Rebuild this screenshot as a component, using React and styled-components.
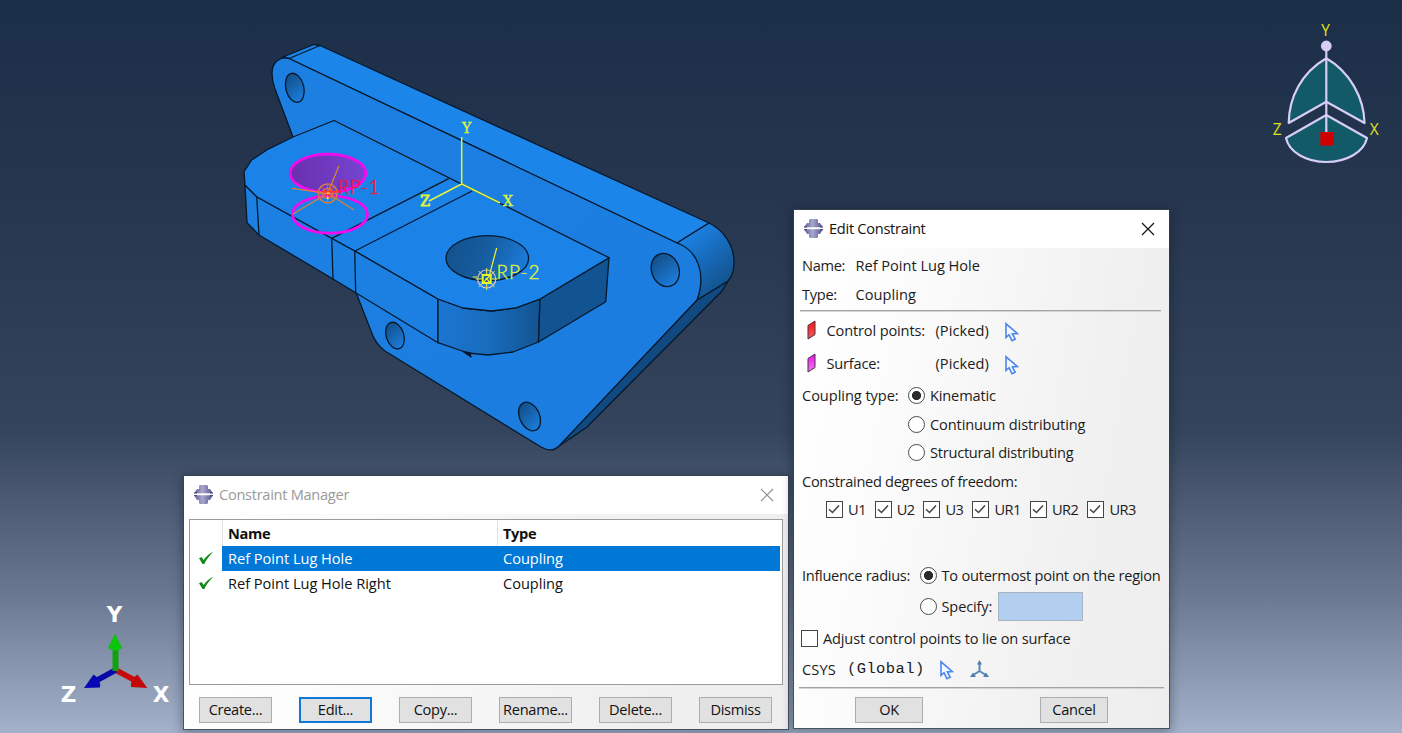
import React from "react";
import styled, { createGlobalStyle } from "styled-components";

const Global = createGlobalStyle`
  body { margin: 0; overflow: hidden; }
  * { box-sizing: border-box; }
`;

const Viewport = styled.main`
  position: relative;
  width: 1402px;
  height: 733px;
  overflow: hidden;
  font-family: "Open Sans", "Noto Sans", sans-serif;
  font-size: 14.6px;
  letter-spacing: -0.3px;
  color: #1c1c1c;
  background: linear-gradient(#1b2e48 0, #27364f 200px, #34445c 430px, #68778f 590px, #a3b2ca 733px);
`;

const Scene = styled.svg`
  display: block;
`;

const Window = styled.section`
  position: absolute;
  left: ${(p) => p.$x}px;
  top: ${(p) => p.$y}px;
  width: ${(p) => p.$w}px;
  height: ${(p) => p.$h}px;
  display: flex;
  flex-direction: column;
  background: linear-gradient(100deg, #fff 0%, #fcfcfc 25%, #f0f0f0 75%, #eeeeee 100%);
  box-shadow: 0 0 0 1px rgba(55, 64, 78, 0.75), 0 2px 10px 2px rgba(10, 18, 32, 0.35);
  svg { display: block; }
`;

const TitleBar = styled.header`
  flex: none;
  height: 38px;
  padding: 0 14px 1px 10px;
  display: flex;
  align-items: center;
  gap: 6px;
  background: #fff;
  color: ${(p) => (p.$inactive ? "#9a9a9a" : "#111")};
  svg:last-child { margin-left: auto; }
`;

const Title = styled.span`
  padding-bottom: 2px;
  letter-spacing: -0.28px;
`;

const Row = styled.div`
  flex: none;
  display: flex;
  align-items: center;
  height: ${(p) => p.$h}px;
  padding-left: ${(p) => p.$pl ?? 8}px;
  white-space: nowrap;
`;

const Cell = styled.span`
  flex: none;
  width: ${(p) => (p.$w ? `${p.$w}px` : "auto")};
  padding-bottom: 1px;
  letter-spacing: ${(p) => p.$ls ?? -0.3}px;
`;

const IconCell = styled.span`
  flex: none;
  width: ${(p) => p.$w}px;
  padding-top: ${(p) => p.$pt || 0}px;
`;

const Mono = styled.span`
  width: 93px;
  font-family: "Liberation Mono", monospace;
  font-size: 15.5px;
  letter-spacing: 0.4px;
`;

const Divider = styled.hr`
  flex: none;
  width: ${(p) => p.$w}px;
  height: 2px;
  margin: ${(p) => p.$m};
  border: 0;
  border-top: 1px solid #a4a4a4;
  background: #d4d4d4;
`;

const Radio = styled.span`
  flex: none;
  width: 17px;
  height: 17px;
  margin: 0 5px 0 -0.5px;
  border: 1.3px solid #4a4a4a;
  border-radius: 50%;
  background: ${(p) => (p.$on ? "radial-gradient(circle, #2b2b2b 0 4.2px, #fff 5px)" : "#fff")};
`;

const Box = styled.span`
  flex: none;
  width: 17px;
  height: 17px;
  margin: 0 5px 0 0;
  border: 1.5px solid #444;
  background: #fff;
  display: flex;
`;

const Field = styled.span`
  width: 85px;
  height: 29px;
  border: 1px solid #a8b4c2;
  background: #b2cff0;
`;

const Button = styled.button`
  width: ${(p) => p.$w}px;
  height: 26px;
  padding: 0 0 2px;
  border: ${(p) => (p.$focus ? "2px solid #0f78d4" : "1px solid #adadad")};
  background: #e1e1e1;
  font: inherit;
  line-height: 20px;
  letter-spacing: -0.3px;
  color: #111;
`;

const ButtonBar = styled.footer`
  display: flex;
  gap: ${(p) => p.$gap}px;
  padding: ${(p) => p.$p};
`;

const List = styled.div`
  width: 594px;
  height: 166px;
  margin: 5px 0 0 5px;
  border: 1px solid #9c9c9c;
  background: #fff;
`;

const ListRow = styled.div`
  display: grid;
  grid-template-columns: 32px 275px 283px;
  height: ${(p) => p.$h || 25}px;
  font-weight: ${(p) => (p.$head ? 700 : 400)};
  letter-spacing: ${(p) => (p.$head ? -0.35 : -0.02)}px;
  > * { display: flex; align-items: center; padding-bottom: ${(p) => (p.$head ? 0 : 1)}px; }
  > :first-child { padding-left: 9px; }
  > :not(:first-child) {
    padding-left: ${(p) => (p.$head ? 5 : 6)}px;
    border-left: ${(p) => (p.$head ? "1px solid #e2e2e2" : "0")};
    background: ${(p) => (p.$selected ? "#0078d7" : "transparent")};
    color: ${(p) => (p.$selected ? "#fff" : "#111")};
  }
`;

const AppIcon = () => (
  <svg width="19" height="19" viewBox="0 0 19 19">
    <defs>
      <linearGradient id="metal" x1="0" x2="1">
        <stop offset="0" stopColor="#5c5c92" />
        <stop offset=".45" stopColor="#a7a7cf" />
        <stop offset="1" stopColor="#50508a" />
      </linearGradient>
    </defs>
    <path d="M6 0h7l1 1v3h2l3 4.300H0L3 4h2V1zM0 10.300h19L16 15h-2v3l-1 1H6l-1-1v-3H3z" fill="url(#metal)" />
    <path d="M0 8h3M16 8h3M0 10.600h3M16 10.600h3" stroke="#44447a" />
  </svg>
);

const Close = ({ color }) => (
  <svg width="14" height="14" viewBox="0 0 14 14">
    <path d="M1 1 13 13M13 1 1 13" stroke={color} strokeWidth="1.15" />
  </svg>
);

const Tick = () => (
  <svg width="15" height="14" viewBox="0 0 15 14">
    <path d="M0 7.2 2.6 6l2 3.1C7 5.700 10.200 2.200 14.300.8 10.700 4.600 7.500 8.300 5.300 13H3.500Z" fill="#128a1c" />
  </svg>
);

const Check = () => (
  <svg width="14" height="14" viewBox="0 0 14 14">
    <path d="M2 7.200 5.500 10.500 12 3.500" fill="none" stroke="#444" strokeWidth="1.5" />
  </svg>
);

const Cursor = () => (
  <svg width="14" height="20" viewBox="0 0 14 20">
    <path d="M1 1.800V15.500l3-2.800 3 6 3.200-1.500L7.300 12l5-.5Z" fill="#f4f8ff" stroke="#4a86ea" strokeWidth="1.600" />
  </svg>
);

const Patch = ({ top, bottom }) => (
  <svg width="9" height="20" viewBox="0 0 9 20">
    <defs>
      <linearGradient id={`p${top.slice(1)}`} x1="0" y1="0" x2="0" y2="1">
        <stop offset="0" stopColor={top} />
        <stop offset="1" stopColor={bottom} />
      </linearGradient>
    </defs>
    <path d="M1 5.500 8 1V14.500L1 19Z" fill={`url(#p${top.slice(1)})`} stroke="#4a3040" />
  </svg>
);

const Csys = () => (
  <svg width="19" height="19" viewBox="0 0 19 19">
    <path d="M9.500 3v8L2.500 15.500M9.500 11l7 4.500" fill="none" stroke="#5588b8" strokeWidth="2" />
    <path d="M9.500 0 12 4.500H7ZM0 17 3 12.500l3 4.500ZM19 17 16 12.500l-3 4.500Z" fill="#4f7fae" />
  </svg>
);

const spokes = (r1, r2, n = 8) =>
  Array.from({ length: n }, (_, i) => {
    const a = (i * 2 * Math.PI) / n;
    return `M${(Math.cos(a) * r1).toFixed(1)} ${(Math.sin(a) * r1).toFixed(1)}L${(Math.cos(a) * r2).toFixed(1)} ${(Math.sin(a) * r2).toFixed(1)}`;
  }).join("");

function Model() {
  return (
    <Scene width="1402" height="733" viewBox="0 0 1402 733">
      <defs>
        <linearGradient id="plate" x1="0" y1="0" x2="1" y2="1">
          <stop offset="0" stopColor="#1c80e2" />
          <stop offset="1" stopColor="#1c7cdf" />
        </linearGradient>
        <linearGradient id="end" gradientUnits="userSpaceOnUse" x1="690" y1="236" x2="728" y2="280">
          <stop offset="0" stopColor="#1b80e0" />
          <stop offset=".5" stopColor="#1769b8" />
          <stop offset="1" stopColor="#14548f" />
        </linearGradient>
        <linearGradient id="nose" x1="0" x2="1">
          <stop offset="0" stopColor="#1b76d2" />
          <stop offset=".5" stopColor="#186cbd" />
          <stop offset="1" stopColor="#135391" />
        </linearGradient>
        <linearGradient id="bore" x1="0" x2="1" y1=".2" y2=".4">
          <stop offset="0" stopColor="#13518c" />
          <stop offset=".5" stopColor="#165c9f" />
          <stop offset="1" stopColor="#1c7bd8" />
        </linearGradient>
        <linearGradient id="hole" x1=".2" x2=".5" y1="0" y2="1">
          <stop offset="0" stopColor="#124c82" />
          <stop offset="1" stopColor="#1b7cdb" />
        </linearGradient>
        <linearGradient id="picked" x1="0" x2="1">
          <stop offset="0" stopColor="#6a2fae" />
          <stop offset="1" stopColor="#7445d2" />
        </linearGradient>
      </defs>

      <g stroke="#06182c" strokeWidth="1.3" strokeLinejoin="round">
        <path d="M697 300 728 281 722 291 587 427 571 438 553 450Z" fill="#114a80" />
        <path d="M283 57 314 44.500 320 45.500 709 223 677 243 289 58.500Z" fill="#1b85e9" />
        <path d="M677 243 709 223C724 230 734 246 734 262 734 270 732 277 728 281L697 300C702 290 704 256 677 243Z" fill="url(#end)" />
        <path d="M289 58.500C280 56 272 62 272 73 272 79 273 84 275 89L293 137 357 295 371 331C374 340 378 346 385 351L541 447C548 451 554 451 559 446L697 300C706 275 699 251 677 243Z" fill="url(#plate)" />
        <path d="M289 58.500 320 45.500" />
        <ellipse cx="294.800" cy="87.800" rx="9" ry="14.800" transform="rotate(-14 294.800 87.800)" fill="url(#hole)" />
        <ellipse cx="665.300" cy="270" rx="13.700" ry="17" transform="rotate(-20 665.300 270)" fill="url(#hole)" />
        <ellipse cx="395" cy="335.600" rx="8.800" ry="13.700" transform="rotate(-18 395 335.600)" fill="url(#hole)" />
        <ellipse cx="529.600" cy="416.500" rx="10" ry="15" transform="rotate(-24 529.600 416.500)" fill="url(#hole)" />

        <path d="M245 185 247 222.700 259 235 333 279 355.700 292.700 438 342.700 438 299 355 251 331.700 238.300 256.700 196.700Z" fill="#1b80e2" />
        <path d="M438 299 463 308 491.700 311 516.700 307.700 540 299 538.500 342 513 352 488 355 468 353 438 342.700Z" fill="url(#nose)" />
        <path d="M540 299 609 257.700 605.700 301.700 538.500 342Z" fill="#125392" />
        <path d="M334 120.500 293 137 266.700 150 251.700 160 244 171.700 245 185 256.700 196.700 331.700 238.300 355 251 438 299 463 308 491.700 311 516.700 307.700 540 299 609 257.700Z" fill="#1b83e7" />
        <path d="M256.700 196.700 259 235M331.700 238.300 333 279M354.700 251 355.700 292.700M331.700 238.300 448.700 178.700M355 251 472 191" />
        <path d="m463 351.500 8 5.500-1-4Z" fill="#06182c" />
        <ellipse cx="487.300" cy="258.200" rx="41.300" ry="22.500" fill="url(#bore)" />
      </g>

      <g fill="none" stroke="#f50af0" strokeWidth="2.800">
        <ellipse cx="328" cy="173.300" rx="37.800" ry="19.100" fill="url(#picked)" />
        <ellipse cx="330" cy="214.500" rx="37.500" ry="18.700" />
      </g>

      <g transform="translate(327.700 193.300)" fill="none" stroke="#dd8038" strokeWidth="1.300">
        <circle r="9.500" />
        <circle r="5" />
        <path d="M0 0 11.300-27.600M0 0-36-5M0 0-34.700 20.700M0 0 26.300 16.700" />
        <path d={spokes(0, 9)} strokeWidth=".8" />
        <path d="M-3.500-3.500 3.500 3.500M3.500-3.500-3.500 3.500M-6-1.500H13" stroke="#ff3a20" strokeWidth="1.400" />
        <path d="M-1 0H2M0 3V6" stroke="#ffd060" strokeWidth="1.500" />
      </g>
      <g transform="translate(486.700 279)" fill="none" stroke="#edf52b" strokeWidth="1.200">
        <path d="M3-5 10-31M-14-2H-9" />
        <path d={spokes(5, 11)} strokeWidth="1" />
        <circle r="9" stroke="#d9c5c4" />
        <rect x="-4" y="-4" width="8" height="8" strokeWidth="2" />
        <path d="M-4 4 4-4M-1-1 4 4" />
      </g>
      <g fontFamily="Lato, sans-serif" fontWeight="300" fontSize="19" letterSpacing="0" strokeWidth=".4">
        <text x="337.500" y="194" fill="#e81838" stroke="#e81838" textLength="42">RP-1</text>
        <text x="496.500" y="279" fill="#dff03a" stroke="#dff03a" textLength="43">RP-2</text>
      </g>

      <g stroke="#e2f53c" strokeWidth="1.500" fill="none">
        <path d="M461.700 137V184L429 201M461.700 184 500 203" />
      </g>
      <g fontFamily="DejaVu Serif, serif" fontSize="14" letterSpacing="0" fill="#dcf53c" stroke="#dcf53c" strokeWidth=".35" textAnchor="middle">
        <text x="466.500" y="133">Y</text>
        <text x="425" y="206" strokeWidth=".8">Z</text>
        <text x="508" y="206">X</text>
      </g>

      <g fill="#135a68" stroke="#d8cdf6" strokeWidth="2.200" strokeLinejoin="round">
        <path d="M1326.300 58.300C1301 73 1289 98 1288.700 123L1326.300 101.700 1364.500 123C1364 98 1350 72 1326.300 58.300Z" />
        <path d="M1326.300 115 1286 138C1289 152 1306 162 1326.300 162S1364 152 1367 138Z" />
        <path d="M1326.300 46V133" />
        <circle cx="1326.300" cy="46" r="4.300" fill="#d8cdf6" />
        <rect x="1320.300" y="132" width="13.600" height="13.600" fill="#d00000" stroke="none" />
      </g>
      <g fontFamily="Open Sans, sans-serif" fontSize="15.500" fill="#e0e018" textAnchor="middle">
        <text x="1325.500" y="35.500">Y</text>
        <text x="1277" y="134.500">Z</text>
        <text x="1374" y="134.500">X</text>
      </g>

      <g>
        <path d="M115.700 670 140 683" stroke="#c80a0a" strokeWidth="5.500" />
        <path d="M115.700 670 92 683" stroke="#0808a8" strokeWidth="5.500" />
        <path d="M115.500 671V645" stroke="#10a010" strokeWidth="6" />
        <path d="M115 633.500 122.300 648Q115 653 108 648Z" fill="#0cc40c" />
        <path d="M147.300 688 137.500 674.500Q130 679 131 687Z" fill="#c40808" />
        <path d="M84 688 93.500 674.500Q101 679 100 687.500Z" fill="#0808b4" />
      </g>
      <g fontFamily="DejaVu Sans, sans-serif" fontWeight="700" fontSize="21.500" letterSpacing="0" fill="#fff" textAnchor="middle">
        <text x="114.500" y="622">Y</text>
        <text x="68.500" y="702">Z</text>
        <text x="161" y="702">X</text>
      </g>
    </Scene>
  );
}

const DOF = [
  ["U1", 48.7],
  ["U2", 48.7],
  ["U3", 49],
  ["UR1", 57.5],
  ["UR2", 57.5],
  ["UR3", 57.5],
];

function ConstraintManager() {
  return (
    <Window $x={184} $y={476} $w={604} $h={253}>
      <TitleBar $inactive>
        <AppIcon />
        <Title>Constraint Manager</Title>
        <Close color="#8f8f8f" />
      </TitleBar>
      <List>
        <ListRow $head $h={26}>
          <span />
          <span>Name</span>
          <span>Type</span>
        </ListRow>
        <ListRow $selected>
          <span><Tick /></span>
          <span>Ref Point Lug Hole</span>
          <span>Coupling</span>
        </ListRow>
        <ListRow>
          <span><Tick /></span>
          <span>Ref Point Lug Hole Right</span>
          <span>Coupling</span>
        </ListRow>
      </List>
      <ButtonBar $gap={27} $p="12px 0 0 15px">
        {["Create...", "Edit...", "Copy...", "Rename...", "Delete...", "Dismiss"].map((t) => (
          <Button key={t} $w={73} $focus={t === "Edit..."}>{t}</Button>
        ))}
      </ButtonBar>
    </Window>
  );
}

function EditConstraint() {
  return (
    <Window $x={794} $y={210} $w={375} $h={518}>
      <TitleBar>
        <AppIcon />
        <Title>Edit Constraint</Title>
        <Close color="#111" />
      </TitleBar>
      <Row $h={34}><Cell $w={53.500}>Name:</Cell><Cell $ls={-0.02}>Ref Point Lug Hole</Cell></Row>
      <Row $h={24}><Cell $w={53.500}>Type:</Cell><Cell $ls={0.05}>Coupling</Cell></Row>
      <Divider $w={361} $m="4px 0 2px 6px" />
      <Row $h={32} $pl={13}>
        <IconCell $w={19.500}><Patch top="#ff1010" bottom="#f06060" /></IconCell>
        <Cell $w={109} $ls={-0.15}>Control points:</Cell>
        <Cell $w={69} $ls={0.05}>(Picked)</Cell>
        <IconCell $w={14} $pt={4}><Cursor /></IconCell>
      </Row>
      <Row $h={34} $pl={13}>
        <IconCell $w={19.500}><Patch top="#f010f0" bottom="#f078f4" /></IconCell>
        <Cell $w={109} $ls={-0.2}>Surface:</Cell>
        <Cell $w={69} $ls={0.05}>(Picked)</Cell>
        <IconCell $w={14} $pt={3}><Cursor /></IconCell>
      </Row>
      <Row $h={30}><Cell $w={106.500} $ls={-0.05}>Coupling type:</Cell><Radio $on /><Cell $ls={-0.15}>Kinematic</Cell></Row>
      <Row $h={28} $pl={114.500}><Radio /><Cell $ls={-0.12}>Continuum distributing</Cell></Row>
      <Row $h={29} $pl={114.500}><Radio /><Cell $ls={-0.24}>Structural distributing</Cell></Row>
      <Row $h={28}><Cell>Constrained degrees of freedom:</Cell></Row>
      <Row $h={29} $pl={32}>
        {DOF.map(([name, w]) => (
          <React.Fragment key={name}>
            <Box><Check /></Box>
            <Cell $w={w - 22} $ls={-0.5}>{name}</Cell>
          </React.Fragment>
        ))}
      </Row>
      <Row $h={36} />
      <Row $h={30}><Cell $w={118}>Influence radius:</Cell><Radio $on /><Cell $ls={-0.23}>To outermost point on the region</Cell></Row>
      <Row $h={32} $pl={126}><Radio /><Cell $w={56} $ls={-0.15}>Specify:</Cell><Field /></Row>
      <Row $h={32} $pl={7}><Box /><Cell $ls={-0.16}>Adjust control points to lie on surface</Cell></Row>
      <Row $h={30}>
        <Cell $w={45} $ls={0.1}>CSYS</Cell>
        <Mono>(Global)</Mono>
        <IconCell $w={30} $pt={2}><Cursor /></IconCell>
        <Csys />
      </Row>
      <Divider $w={365} $m="3px 0 8px 5px" />
      <ButtonBar $gap={117} $p="0 0 0 61px">
        <Button $w={68}>OK</Button>
        <Button $w={68}>Cancel</Button>
      </ButtonBar>
    </Window>
  );
}

export default function App() {
  return (
    <Viewport>
      <Global />
      <Model />
      <ConstraintManager />
      <EditConstraint />
    </Viewport>
  );
}
